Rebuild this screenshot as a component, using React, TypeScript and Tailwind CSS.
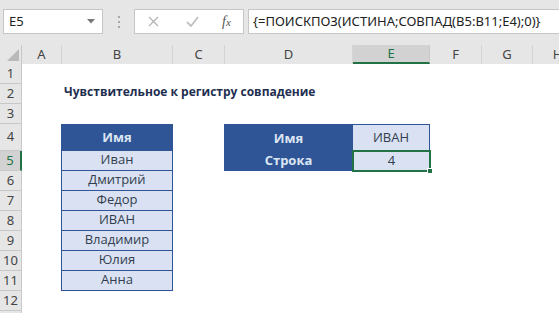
import React from "react";

const COLS = ["A", "B", "C", "D", "E", "F", "G", "H"];
const WIDTHS = ["w-[40px]", "w-[111px]", "w-[52px]", "w-[128px]", "w-[77px]", "w-[52px]", "w-[51px]", "w-[50px]"];

const names = ["Иван", "Дмитрий", "Федор", "ИВАН", "Владимир", "Юлия", "Анна"];

function RowHead({ n, h, active }: { n?: number; h: string; active?: boolean }) {
    return (
        <div
            className={`${h} w-[22px] shrink-0 flex items-center justify-center border-b border-[#c8c8c8] text-[13px] text-[#444] font-['Noto_Sans',sans-serif] ${
                active ? "bg-[#d2d2d2] border-r-2 border-r-[#217346] text-[#217346]" : "bg-[#e6e6e6] border-r border-r-[#c8c8c8]"
            }`}
        >
            {n}
        </div>
    );
}

function Blank({ w }: { w: string }) {
    return <div className={`${w} shrink-0`} />;
}

export default function App() {
    const rowH = (r: number) => (r === 4 ? "h-[27px]" : "h-[20px]");

    const renderRow = (r: number) => {
        const h = rowH(r);
        const cells: React.ReactNode[] = [];
        COLS.forEach((c, i) => {
            const w = WIDTHS[i];
            const key = c + r;
            if (c === "B" && r === 2) {
                cells.push(
                    <div key={key} className={`${w} shrink-0 relative`}>
                        <span className="absolute left-[2px] bottom-[3px] whitespace-nowrap font-bold text-[12px] text-[#1f2f50]">
                            Чувствительное к регистру совпадение
                        </span>
                    </div>
                );
            } else if (c === "B" && r === 4) {
                cells.push(
                    <div key={key} className="shrink-0 -ml-px w-[112px] border border-[#2f5597] bg-[#2f5597] flex items-end justify-center pb-[3px] text-[13px] font-bold text-[#dce6f2]">
                        Имя
                    </div>
                );
            } else if (c === "B" && r >= 5 && r <= 11) {
                cells.push(
                    <div key={key} className="shrink-0 -ml-px w-[112px] border-x border-b border-[#2f5597] bg-[#d9e1f2] flex items-end justify-center pb-[1px] text-[13px] text-[#333f50]">
                        {names[r - 5]}
                    </div>
                );
            } else if (c === "D" && (r === 4 || r === 5)) {
                cells.push(
                    <div key={key} className={`shrink-0 -ml-px w-[129px] bg-[#2f5597] flex items-end justify-center ${r === 4 ? "pb-[3px]" : "pb-[1px]"} text-[13px] font-bold text-[#dce6f2]`}>
                        {r === 4 ? "Имя" : "Строка"}
                    </div>
                );
            } else if (c === "E" && r === 4) {
                cells.push(
                    <div key={key} className={`${w} shrink-0 border border-l-0 border-[#2f5597] bg-[#d9e1f2] flex items-end justify-center pb-[3px] text-[13px] text-[#333f50]`}>
                        ИВАН
                    </div>
                );
            } else if (c === "E" && r === 5) {
                cells.push(
                    <div key={key} className={`${w} shrink-0 relative bg-[#d9e1f2] flex items-end justify-center pb-[1px] text-[13px] text-[#333f50]`}>
                        4
                        <div className="absolute -left-px -top-px -right-px -bottom-px border-2 border-[#217346]" />
                        <div className="absolute -right-[3px] -bottom-[3px] w-[6px] h-[6px] bg-[#217346] border border-white" />
                    </div>
                );
            } else {
                cells.push(<Blank key={key} w={w} />);
            }
        });
        return (
            <div key={r} className={`flex ${h} bg-white font-['Open_Sans',sans-serif]`}>
                <RowHead n={r <= 12 ? r : undefined} h={h} active={r === 5} />
                <div className="flex">{cells}</div>
            </div>
        );
    };

    return (
        <div className="w-[559px] h-[313px] overflow-hidden bg-[#e6e6e6] font-['Open_Sans',sans-serif]">
            {/* formula bar */}
            <div className="h-[45px] flex items-start pt-[9px]">
                <div className="ml-[3px] w-[100px] h-[25px] bg-white border border-[#c6c6c6] flex items-center justify-between pl-[5px] pr-[7px]">
                    <span className="text-[13px] text-[#222] font-['Noto_Sans',sans-serif]">E5</span>
                    <svg width="8" height="5" viewBox="0 0 8 5">
                        <path d="M0 0h8L4 4.5z" fill="#777" />
                    </svg>
                </div>
                <div className="w-[31px] h-[25px] flex flex-col items-center justify-center gap-[3px]">
                    <span className="w-[2px] h-[2px] bg-[#a8a8a8]" />
                    <span className="w-[2px] h-[2px] bg-[#a8a8a8]" />
                    <span className="w-[2px] h-[2px] bg-[#a8a8a8]" />
                </div>
                <div className="w-[110px] h-[25px] bg-white border border-[#c6c6c6] flex items-center">
                    <svg className="ml-[13px]" width="11" height="11" viewBox="0 0 11 11">
                        <path d="M1 1l9 9M10 1l-9 9" stroke="#b4b4b4" strokeWidth="1.3" />
                    </svg>
                    <svg className="ml-[27px]" width="13" height="11" viewBox="0 0 13 11">
                        <path d="M1 6l4 4 7-9" stroke="#c0c0c0" strokeWidth="1.8" fill="none" />
                    </svg>
                    <span className="ml-[23px] italic font-['Liberation_Serif',serif] text-[14px] text-[#555]">
                        f<span className="text-[11px]">x</span>
                    </span>
                </div>
                <div className="ml-[4px] flex-1 h-[25px] bg-white border border-[#c6c6c6] border-r-0 flex items-center pl-[4px]">
                    <span className="whitespace-nowrap text-[13px] text-[#222] font-['Noto_Sans',sans-serif]">
                        {"{=ПОИСКПОЗ(ИСТИНА;СОВПАД(B5:B11;E4);0)}"}
                    </span>
                </div>
            </div>

            {/* column headers */}
            <div className="flex h-[19px] bg-[#e6e6e6] font-['Noto_Sans',sans-serif]">
                <div className="w-[22px] shrink-0 relative border-r border-[#c8c8c8]">
                    <svg className="absolute right-[2px] bottom-[3px]" width="12" height="12" viewBox="0 0 12 12">
                        <path d="M12 0V12H0z" fill="#b9b9b9" />
                    </svg>
                </div>
                {COLS.map((c, i) => (
                    <div
                        key={c}
                        className={`${WIDTHS[i]} shrink-0 flex items-center justify-center text-[13px] ${
                            c === "E"
                                ? "bg-[#d2d2d2] border-b-2 border-[#217346] text-[#217346] border-r border-r-[#c8c8c8]"
                                : "text-[#444] border-r border-[#d4d4d4]"
                        }`}
                    >
                        {c}
                    </div>
                ))}
            </div>

            {/* rows */}
            <div>{[1, 2, 3, 4, 5, 6, 7, 8, 9, 10, 11, 12, 13].map((r) => renderRow(r))}</div>
        </div>
    );
}
